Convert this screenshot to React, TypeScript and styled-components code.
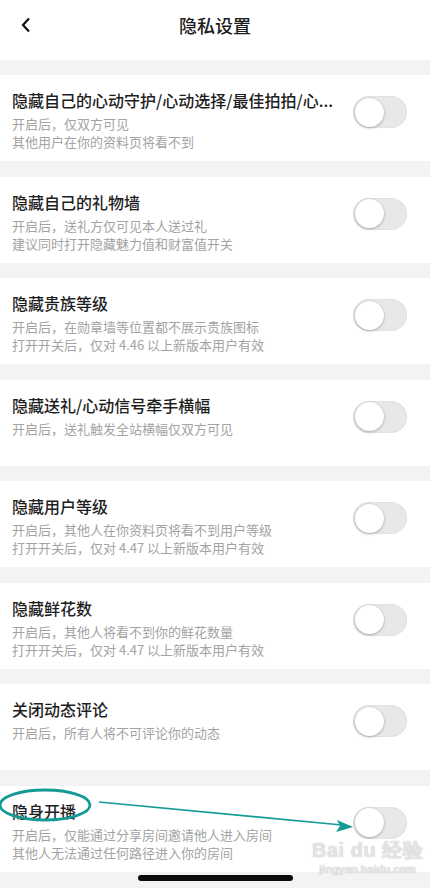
import React from "react";
import styled, { createGlobalStyle } from "styled-components";

const GlobalStyle = createGlobalStyle`
  * { box-sizing: border-box; }
  body {
    margin: 0;
    background: #f3f3f3;
    font-family: "Noto Sans CJK SC", "Noto Sans", sans-serif;
  }
`;

const Page = styled.div`
  position: relative;
  width: 430px;
  height: 888px;
  overflow: hidden;
  background: #f3f3f3;
`;

const Header = styled.div`
  height: 60px;
  background: #fff;
  display: flex;
  align-items: flex-start;
  justify-content: center;
  position: relative;
  padding-top: 11px;
`;

const BackButton = styled.div`
  position: absolute;
  left: 21px;
  top: 16px;
  width: 14px;
  height: 18px;
  display: flex;
  align-items: center;
`;

const HeaderTitle = styled.h1`
  margin: 0;
  font-size: 18px;
  font-weight: 500;
  line-height: 28px;
  color: #1c1c1c;
`;

const List = styled.div`
  display: flex;
  flex-direction: column;
  gap: 15.5px;
  padding-top: 15px;
`;

const Row = styled.div`
  position: relative;
  height: 86px;
  background: #fff;
  display: flex;
  align-items: flex-start;
  padding: 13px 23px 0 12px;
  gap: 16px;
`;

const TextBlock = styled.div`
  flex: 1;
  min-width: 0;
`;

const Title = styled.div`
  font-size: 16px;
  line-height: 24px;
  font-weight: 500;
  color: #1e1e1e;
  white-space: nowrap;
  margin-bottom: 3px;
`;

const Desc = styled.div`
  font-size: 13px;
  line-height: 18px;
  color: #a3a3a3;
  white-space: nowrap;
`;

const Track = styled.div<{ $on?: boolean }>`
  flex: none;
  margin-top: 8px;
  width: 54px;
  height: 32px;
  border-radius: 16px;
  background: ${(p) => (p.$on ? "#4cd964" : "#e8e8e8")};
  box-shadow: inset 0 0 0 1px #e2e2e2;
  display: flex;
  align-items: center;
  padding: 0 2px;
  justify-content: ${(p) => (p.$on ? "flex-end" : "flex-start")};
`;

const Knob = styled.div`
  width: 29px;
  height: 29px;
  border-radius: 50%;
  background: #fff;
  box-shadow: 0 1px 3px rgba(0, 0, 0, 0.25), 0 0 0 0.5px rgba(0, 0, 0, 0.06);
`;

const BottomBar = styled.div`
  height: 16px;
  display: flex;
  justify-content: center;
  padding-top: 3px;
`;

const HomeIndicator = styled.div`
  width: 155px;
  height: 6px;
  border-radius: 3px;
  background: #0c0c0c;
`;

const Annotation = styled.svg`
  position: absolute;
  left: 0;
  top: 0;
  pointer-events: none;
`;

const Watermark = styled.div`
  position: absolute;
  left: 312px;
  top: 840px;
  display: flex;
  flex-direction: column;
  align-items: center;
  color: rgba(255, 255, 255, 0.6);
  font-family: "Liberation Sans", sans-serif;
  font-weight: 700;
  line-height: 1;
  text-shadow: 0 0 1px rgba(170, 170, 170, 0.55), 0 0 1px rgba(170, 170, 170, 0.55);
`;

const WatermarkMain = styled.div`
  font-size: 20px;
  letter-spacing: 0.5px;
`;

const WatermarkSub = styled.div`
  font-size: 11px;
  margin-top: 4px;
`;

const items = [
  {
    title: "隐藏自己的心动守护/心动选择/最佳拍拍/心...",
    desc: ["开启后，仅双方可见", "其他用户在你的资料页将看不到"],
  },
  {
    title: "隐藏自己的礼物墙",
    desc: ["开启后，送礼方仅可见本人送过礼", "建议同时打开隐藏魅力值和财富值开关"],
  },
  {
    title: "隐藏贵族等级",
    desc: ["开启后，在勋章墙等位置都不展示贵族图标", "打开开关后，仅对 4.46 以上新版本用户有效"],
  },
  {
    title: "隐藏送礼/心动信号牵手横幅",
    desc: ["开启后，送礼触发全站横幅仅双方可见"],
  },
  {
    title: "隐藏用户等级",
    desc: ["开启后，其他人在你资料页将看不到用户等级", "打开开关后，仅对 4.47 以上新版本用户有效"],
  },
  {
    title: "隐藏鲜花数",
    desc: ["开启后，其他人将看不到你的鲜花数量", "打开开关后，仅对 4.47 以上新版本用户有效"],
  },
  {
    title: "关闭动态评论",
    desc: ["开启后，所有人将不可评论你的动态"],
  },
  {
    title: "隐身开播",
    desc: ["开启后，仅能通过分享房间邀请他人进入房间", "其他人无法通过任何路径进入你的房间"],
  },
];

function Toggle({ on }: { on?: boolean }) {
  return (
    <Track $on={on}>
      <Knob />
    </Track>
  );
}

export default function App() {
  return (
    <Page>
      <GlobalStyle />
      <Header>
        <BackButton>
          <svg width="10" height="16" viewBox="0 0 10 16">
            <path d="M8 1.5 L2 8 L8 14.5" fill="none" stroke="#111" strokeWidth="2.2" />
          </svg>
        </BackButton>
        <HeaderTitle>隐私设置</HeaderTitle>
      </Header>
      <List>
        {items.map((item) => (
          <Row key={item.title}>
            <TextBlock>
              <Title>{item.title}</Title>
              {item.desc.map((d) => (
                <Desc key={d}>{d}</Desc>
              ))}
            </TextBlock>
            <Toggle />
          </Row>
        ))}
      </List>
      <BottomBar>
        <HomeIndicator />
      </BottomBar>
      <Watermark>
        <WatermarkMain>Bai du 经验</WatermarkMain>
        <WatermarkSub>jingyan.baidu.com</WatermarkSub>
      </Watermark>
      <Annotation width="430" height="888" viewBox="0 0 430 888">
        <ellipse cx="45" cy="805" rx="45" ry="15" fill="none" stroke="#159a96" strokeWidth="2.8" />
        <line x1="99" y1="802" x2="342" y2="825" stroke="#159a96" strokeWidth="1.6" />
        <path d="M353 827 L337 820 L340 826 L336 832 Z" fill="#159a96" />
      </Annotation>
    </Page>
  );
}
